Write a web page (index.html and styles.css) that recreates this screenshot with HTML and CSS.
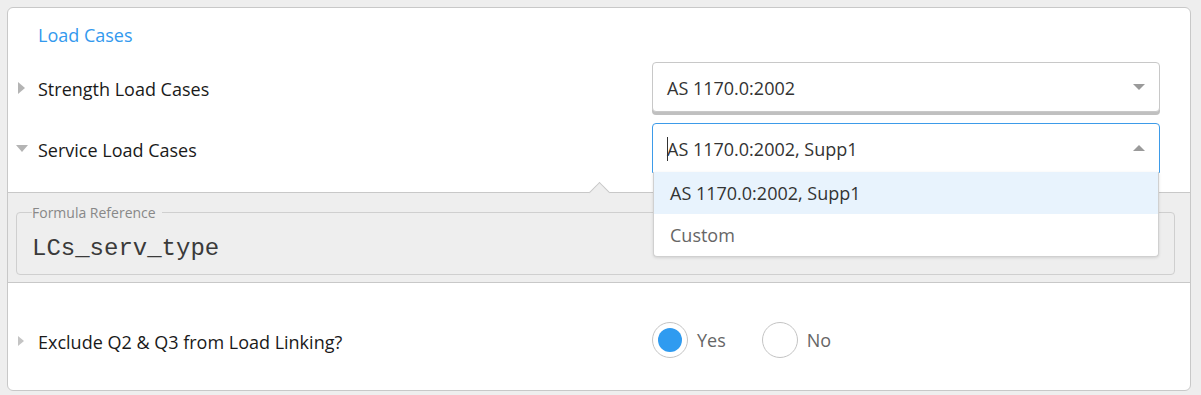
FILE: index.html
```html
<!DOCTYPE html>
<html lang="en">
<head>
    <meta charset="UTF-8">
    <meta name="viewport" content="width=device-width, initial-scale=1.0">
    <title>Load Cases</title>
    <link rel="stylesheet" href="styles.css">
</head>
<body>
    <div class="card">
        <div class="section top">
            <h2 class="group-title">Load Cases</h2>

            <div class="row">
                <div class="label"><span class="toggle right"></span>Strength Load Cases</div>
                <div class="select closed">
                    <span class="value">AS 1170.0:2002</span>
                    <span class="arrow down"></span>
                </div>
            </div>

            <div class="row">
                <div class="label"><span class="toggle open"></span>Service Load Cases</div>
                <div class="select active">
                    <span class="value"><span class="caret"></span>AS 1170.0:2002, Supp1</span>
                    <span class="arrow up"></span>
                    <ul class="menu">
                        <li class="selected">AS 1170.0:2002, Supp1</li>
                        <li>Custom</li>
                    </ul>
                </div>
            </div>
        </div>

        <div class="panel">
            <fieldset class="formula">
                <legend>Formula Reference</legend>
                <div class="code">LCs_serv_type</div>
            </fieldset>
        </div>

        <div class="section bottom">
            <div class="row">
                <div class="label"><span class="toggle right small"></span>Exclude Q2 &amp; Q3 from Load Linking?</div>
                <div class="radios">
                    <label class="radio checked"><span class="dot"></span>Yes</label>
                    <label class="radio"><span class="dot"></span>No</label>
                </div>
            </div>
        </div>
    </div>
</body>
</html>
```

FILE: styles.css
```css
body {
    margin: 0;
    padding: 7px 10px 0 7px;
    background: #eeeeee;
    font-family: 'Open Sans', 'Noto Sans', sans-serif;
    color: #222;
}
.card {
    width: 1182px;
    height: 382px;
    background: #fff;
    border: 1px solid #c8c8c8;
    border-radius: 6px;
    position: relative;
}
.section.top {
    padding: 15px 30px 19px 0;
}
.group-title {
    margin: 0 0 14px 30px;
    height: 25px;
    line-height: 25px;
    font-size: 18px;
    font-weight: normal;
    color: #3399ee;
}
.row {
    display: flex;
    align-items: center;
    height: 50px;
}
.row + .row {
    margin-top: 11px;
}
.label {
    flex: 1;
    display: flex;
    align-items: center;
    padding-top: 4px;
    font-size: 18px;
    color: #1a1a1a;
}
.toggle {
    width: 30px;
    height: 12px;
    position: relative;
    top: -2px;
}
.toggle::before {
    content: "";
    position: absolute;
    top: 0;
    left: 10px;
    border-style: solid;
    border-color: transparent;
}
.toggle.right::before {
    border-width: 6px 0 6px 7px;
    border-left-color: #b4b4b4;
    top: 1px;
}
.toggle.right.small::before {
    border-width: 5px 0 5px 6px;
    border-left-color: #c4c4c4;
    top: 2px;
}
.toggle.open::before {
    left: 8px;
    top: 3px;
    border-width: 7px 6px 0 6px;
    border-top-color: #b4b4b4;
}
.select {
    width: 508px;
    height: 50px;
    box-sizing: border-box;
    border: 1px solid #c8c8c8;
    border-radius: 4px;
    display: flex;
    align-items: center;
    padding: 0 14px;
    font-size: 18px;
    color: #333;
    position: relative;
    background: #fff;
}
.select.closed {
    box-shadow: 0 3px 0 #c0c0c0;
}
.select.active {
    border-color: #3d9be9;
    border-radius: 4px 4px 0 0;
}
.value {
    flex: 1;
    display: flex;
    align-items: center;
    padding-top: 1px;
}
.caret {
    width: 1px;
    height: 24px;
    background: #333;
    margin-right: -1px;
}
.arrow {
    width: 0;
    height: 0;
    border-style: solid;
    border-color: transparent;
}
.arrow.down {
    border-width: 6px 6px 0 6px;
    border-top-color: #9a9a9a;
}
.arrow.up {
    border-width: 0 6px 6px 6px;
    border-bottom-color: #9a9a9a;
}
.menu {
    position: absolute;
    top: 48px;
    left: 0;
    right: 0;
    margin: 0;
    padding: 0;
    list-style: none;
    background: #fff;
    border: 1px solid #d0d0d0;
    border-top: none;
    border-radius: 0 0 4px 4px;
    box-shadow: 0 1px 3px rgba(0, 0, 0, 0.12);
    z-index: 5;
}
.menu li {
    height: 42px;
    line-height: 43px;
    padding: 0 16px;
    color: #666;
}
.menu li.selected {
    background: #e8f3fd;
    color: #333;
}
.panel {
    position: relative;
    background: #eeeeee;
    border-top: 1px solid #c8c8c8;
    border-bottom: 1px solid #c8c8c8;
    padding: 10px 15px 7px 8px;
}
.panel::before {
    content: "";
    position: absolute;
    left: 584px;
    top: -8px;
    width: 14px;
    height: 14px;
    background: #eeeeee;
    border-top: 1px solid #c8c8c8;
    border-left: 1px solid #c8c8c8;
    transform: rotate(45deg);
}
.formula {
    margin: 0;
    border: 1px solid #cfcfcf;
    border-radius: 4px;
    padding: 12px 15px 0 15px;
    height: 72px;
    box-sizing: border-box;
}
.formula legend {
    padding: 0 6px 0 0;
    font-size: 14px;
    color: #888;
}
.code {
    font-family: 'Liberation Mono', 'Courier New', monospace;
    font-size: 24px;
    color: #3a3a3a;
    line-height: 30px;
}
.section.bottom {
    padding: 32px 30px 0 0;
}
.radios {
    width: 508px;
    display: flex;
    align-items: center;
}
.radio {
    display: flex;
    align-items: center;
    font-size: 18px;
    color: #666;
    margin-right: 36px;
}
.dot {
    width: 36px;
    height: 36px;
    box-sizing: border-box;
    border: 1px solid #c4c4c4;
    border-radius: 50%;
    margin-right: 9px;
    position: relative;
    background: #fff;
}
.radio.checked .dot::after {
    content: "";
    position: absolute;
    left: 5px;
    top: 5px;
    width: 24px;
    height: 24px;
    border-radius: 50%;
    background: #2f9bf0;
}
```
